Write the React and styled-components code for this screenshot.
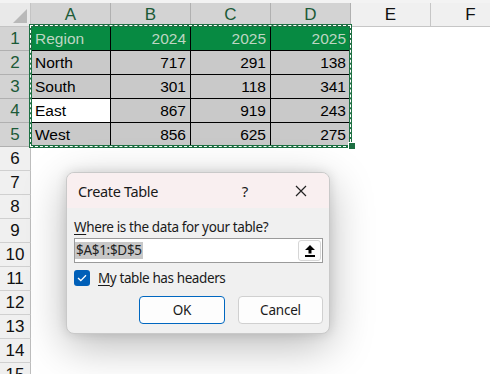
import React from 'react';
import styled, { createGlobalStyle } from 'styled-components';

const GlobalStyle = createGlobalStyle`
    html, body {
        margin: 0;
        padding: 0;
        background: #ffffff;
        overflow: hidden;
    }
`;

const Page = styled.div`
    position: relative;
    width: 490px;
    height: 374px;
    overflow: hidden;
    background: #ffffff;
    font-family: "Liberation Sans", Arial, sans-serif;
`;

const TopStrip = styled.div`
    height: 3px;
    background: #f3f3f3;
`;

const Sheet = styled.div`
    display: grid;
    grid-template-columns: 31px repeat(6, 80px);
    grid-auto-rows: 24px;
`;

const Corner = styled.div`
    position: relative;
    box-sizing: border-box;
    background: #e9e9e9;
    border-right: 1px solid #c4c4c4;
    border-bottom: 1px solid #c4c4c4;
    &::after {
        content: '';
        position: absolute;
        right: 3px;
        bottom: 3px;
        width: 14px;
        height: 14px;
        background: #b9b9b9;
        clip-path: polygon(100% 0, 100% 100%, 0 100%);
    }
`;

const ColHead = styled.div`
    box-sizing: border-box;
    display: flex;
    align-items: center;
    justify-content: center;
    font-size: 17px;
    background: ${(p) => (p.$active ? '#d3d3d3' : '#f0f0f0')};
    color: ${(p) => (p.$active ? '#1c5a37' : '#111')};
    border-right: 1px solid ${(p) => (p.$active ? '#b0b0b0' : '#c6c6c6')};
    border-bottom: 1px solid #c6c6c6;
`;

const RowHead = styled.div`
    box-sizing: border-box;
    display: flex;
    align-items: center;
    justify-content: center;
    font-size: 17px;
    background: ${(p) => (p.$active ? '#d3d3d3' : '#f0f0f0')};
    color: ${(p) => (p.$active ? '#1c5a37' : '#111')};
    border-right: 1px solid #bdbdbd;
    border-bottom: 1px solid ${(p) => (p.$active ? '#b0b0b0' : '#d0d0d0')};
`;

const Cell = styled.div`
    box-sizing: border-box;
    display: flex;
    align-items: center;
    justify-content: ${(p) => (p.$num ? 'flex-end' : 'flex-start')};
    padding: 0 4px;
    font-size: 15.5px;
    background: ${(p) => p.$bg || '#ffffff'};
    color: ${(p) => p.$color || '#000'};
    border-right: 1px solid ${(p) => (p.$table ? '#000' : 'transparent')};
    border-bottom: 1px solid ${(p) => (p.$table ? '#000' : 'transparent')};
`;

const Selection = styled.div`
    position: absolute;
    left: 29px;
    top: 24px;
    width: 323px;
    height: 124px;
    box-sizing: border-box;
    border: 3px solid #1d6f42;
    pointer-events: none;
    &::before {
        content: '';
        position: absolute;
        inset: -2px;
        border: 1px dashed #ffffff;
    }
`;

const FillHandle = styled.div`
    position: absolute;
    left: 348px;
    top: 142px;
    width: 6px;
    height: 6px;
    background: #1d6f42;
    border-left: 1px solid #fff;
    border-top: 1px solid #fff;
`;

const Dialog = styled.div`
    position: absolute;
    left: 66px;
    top: 172px;
    width: 264px;
    box-sizing: border-box;
    border: 1px solid #c9c9c9;
    border-radius: 8px;
    background: #f0f0f0;
    overflow: hidden;
    box-shadow: 0 12px 44px rgba(0, 0, 0, 0.28), 0 0 12px rgba(0, 0, 0, 0.12);
    font-family: "Noto Sans", "Open Sans", sans-serif;
    color: #1a1a1a;
`;

const TitleBar = styled.div`
    height: 35px;
    display: flex;
    align-items: center;
    background: #f9eff0;
    padding-left: 11px;
`;

const Title = styled.span`
    flex: 1;
    font-size: 14.5px;
    letter-spacing: -0.35px;
`;

const TitleButton = styled.span`
    width: 56px;
    display: flex;
    align-items: center;
    justify-content: center;
    font-size: 15px;
`;

const Body = styled.div`
    display: flex;
    flex-direction: column;
    padding: 10px 6px 9px 7px;
`;

const Label = styled.div`
    font-size: 13.5px;
    line-height: 19px;
    letter-spacing: -0.38px;
    margin-bottom: 1px;
    u {
        text-decoration-thickness: 1px;
        text-underline-offset: 2px;
    }
`;

const InputBox = styled.div`
    height: 25px;
    box-sizing: border-box;
    display: flex;
    align-items: center;
    justify-content: space-between;
    background: #ffffff;
    border: 1px solid #9a9a9a;
    padding: 0 1px 0 0;
`;

const Selected = styled.span`
    background: #c8c8c8;
    font-size: 13.5px;
    line-height: 17px;
    letter-spacing: -0.3px;
    padding: 0 1px;
    color: #222;
`;

const UploadButton = styled.span`
    width: 23px;
    height: 21px;
    box-sizing: border-box;
    display: flex;
    align-items: center;
    justify-content: center;
    border: 1px solid #d6d6d6;
    border-radius: 3px;
    background: #fdfdfd;
`;

const CheckRow = styled.label`
    display: flex;
    align-items: center;
    gap: 8px;
    margin-top: 6px;
    font-size: 13.5px;
    letter-spacing: -0.4px;
    u {
        text-decoration-thickness: 1px;
        text-underline-offset: 2px;
    }
`;

const CheckBox = styled.span`
    width: 16px;
    height: 16px;
    border-radius: 3px;
    background: #005fb8;
    display: flex;
    align-items: center;
    justify-content: center;
`;

const ButtonRow = styled.div`
    display: flex;
    justify-content: flex-end;
    gap: 13px;
    margin-top: 9px;
`;

const Button = styled.button`
    width: ${(p) => p.$w}px;
    height: 28px;
    box-sizing: border-box;
    background: #fdfdfd;
    border: 1px solid ${(p) => (p.$primary ? '#0067c0' : '#d0d0d0')};
    border-radius: 4px;
    font-family: inherit;
    font-size: 13.5px;
    letter-spacing: -0.2px;
    color: #1a1a1a;
    padding: 0;
`;

const cols = ['A', 'B', 'C', 'D', 'E', 'F'];

const data = [
    ['Region', '2024', '2025', '2025'],
    ['North', '717', '291', '138'],
    ['South', '301', '118', '341'],
    ['East', '867', '919', '243'],
    ['West', '856', '625', '275'],
];

const App = () => {
    const rows = [];
    for (let r = 1; r <= 15; r++) {
        const active = r <= 5;
        rows.push(<RowHead key={'h' + r} $active={active}>{r}</RowHead>);
        cols.forEach((c, ci) => {
            const value = active && ci < 4 ? data[r - 1][ci] : '';
            const inTable = active && ci < 4;
            let bg = '#ffffff';
            let color = '#000';
            if (inTable) {
                bg = r === 1 ? '#078a42' : '#c9c9c9';
                if (r === 1) color = '#bed6c2';
                if (r === 4 && ci === 0) bg = '#ffffff';
            }
            rows.push(
                <Cell key={c + r} $table={inTable} $bg={bg} $color={color} $num={ci > 0}>
                    {value}
                </Cell>
            );
        });
    }

    return (
        <Page>
            <GlobalStyle />
            <TopStrip />
            <Sheet>
                <Corner />
                {cols.map((c, i) => (
                    <ColHead key={c} $active={i < 4}>{c}</ColHead>
                ))}
                {rows}
            </Sheet>
            <Selection />
            <FillHandle />
            <Dialog>
                <TitleBar>
                    <Title>Create Table</Title>
                    <TitleButton>?</TitleButton>
                    <TitleButton>
                        <svg width="12" height="12" viewBox="0 0 12 12">
                            <path d="M1 1 L11 11 M11 1 L1 11" stroke="#222" strokeWidth="1.2" />
                        </svg>
                    </TitleButton>
                </TitleBar>
                <Body>
                    <Label><u>W</u>here is the data for your table?</Label>
                    <InputBox>
                        <Selected>$A$1:$D$5</Selected>
                        <UploadButton>
                            <svg width="12" height="13" viewBox="0 0 12 13">
                                <path d="M6 1 L11 6 L7.5 6 L7.5 9.5 L4.5 9.5 L4.5 6 L1 6 Z" fill="#000" />
                                <rect x="1" y="11" width="10" height="2" fill="#000" />
                            </svg>
                        </UploadButton>
                    </InputBox>
                    <CheckRow>
                        <CheckBox>
                            <svg width="10" height="8" viewBox="0 0 10 8">
                                <path d="M1 4 L3.8 6.6 L9 1.2" stroke="#fff" strokeWidth="1.3" fill="none" />
                            </svg>
                        </CheckBox>
                        <span><u>M</u>y table has headers</span>
                    </CheckRow>
                    <ButtonRow>
                        <Button $primary $w={86}>OK</Button>
                        <Button $w={85}>Cancel</Button>
                    </ButtonRow>
                </Body>
            </Dialog>
        </Page>
    );
};

export default App;
